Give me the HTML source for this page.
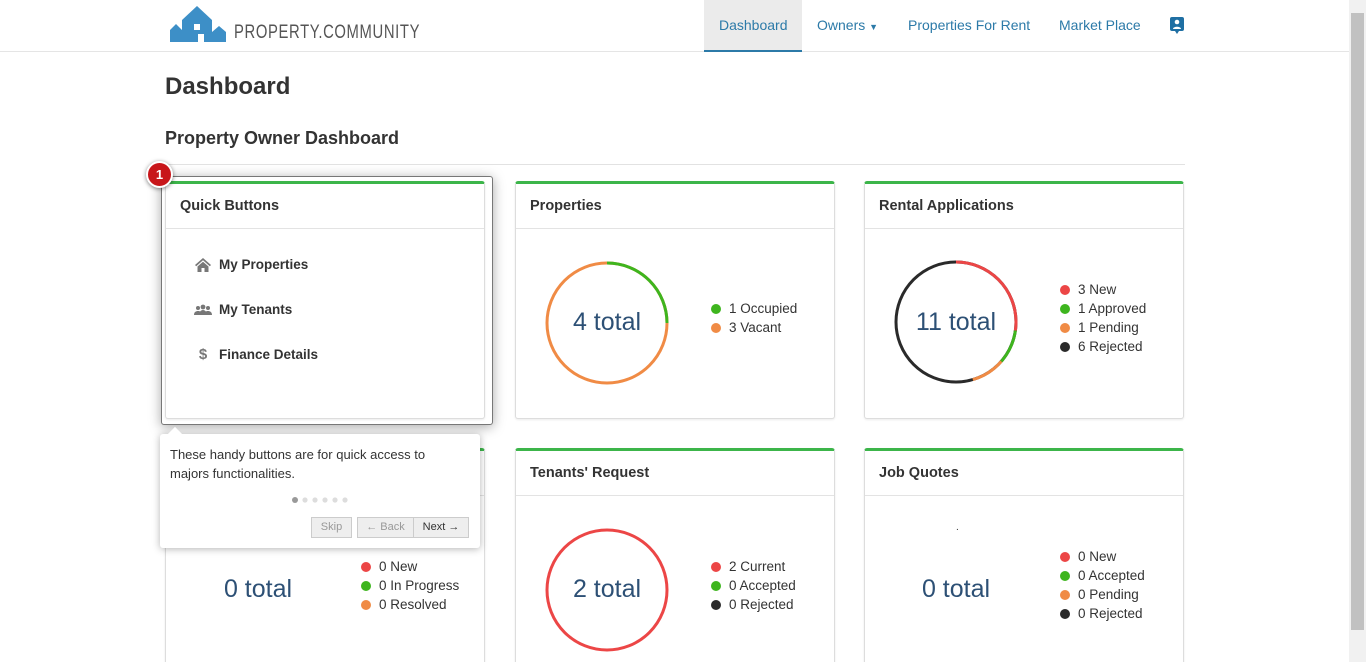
<!DOCTYPE html>
<html><head><meta charset="utf-8"><style>
*{margin:0;padding:0;box-sizing:border-box}
html,body{width:1366px;height:662px;overflow:hidden}
body{background:#fff;font-family:"Liberation Sans",Arial,sans-serif;color:#333;position:relative}
.a{position:absolute}
.nav{left:0;top:0;width:1349px;height:52px;border-bottom:1px solid #e5e5e5}
.nl{top:17px;font-size:14px;color:#2c7aa8}
.card{position:absolute;width:320px;height:238px;border:1px solid #ddd;border-top:3px solid #3cb54a;border-radius:3px;background:#fff;box-shadow:0 1px 2px rgba(0,0,0,.08)}
.card h3{font-size:14.5px;font-weight:bold;color:#333;padding:14px 14px 0;height:45px;border-bottom:1px solid #e3e3e3}
.tot{position:absolute;font-size:25px;color:#2d5075;width:120px;text-align:center}
.lg{position:absolute;font-size:13.5px;color:#333;line-height:19px}
.lg i{display:inline-block;width:10px;height:10px;border-radius:50%;margin-right:8px;vertical-align:-1px}
.r{background:#ec4646}.g{background:#3eb51e}.o{background:#f08b45}.k{background:#2a2a2a}
.qi{position:absolute;left:53px;font-size:13.5px;font-weight:bold;color:#333}
.ic{position:absolute;left:28px;width:18px;text-align:center}
.btn{position:absolute;top:517px;height:21px;border:1px solid #ccc;background:#eee;font-size:11px;color:#999;text-align:center;line-height:19px}
</style></head><body>
<div class="a nav"></div>
<svg class="a" style="left:168px;top:4px" width="60" height="40" viewBox="0 0 60 40">
<path fill="#3d8fc7" d="M2 38V26l6-6 6 6v12zM14 38V16L29 2l15 14v22H36v-8h-6v8zM44 38V28l7-6 7 6v10z"/>
<rect x="26" y="20" width="6" height="6" fill="#fff"/></svg>
<div class="a" style="left:234px;top:22px;font-size:19px;color:#555;letter-spacing:.8px;transform:scaleX(.78);transform-origin:left">PROPERTY.COMMUNITY</div>
<div class="a" style="left:704px;top:0;width:98px;height:52px;background:#ebebeb;border-bottom:2px solid #2c7aa8"></div>
<div class="a nl" style="left:719px">Dashboard</div>
<div class="a nl" style="left:817px">Owners <span style="font-size:9px">▼</span></div>
<div class="a nl" style="left:908px">Properties For Rent</div>
<div class="a nl" style="left:1059px">Market Place</div>
<svg class="a" style="left:1170px;top:17px" width="14" height="17" viewBox="0 0 14 17"><rect width="14" height="14" rx="2" fill="#1f6fa3"/><path d="M5 14h4l-2 3z" fill="#1f6fa3"/><circle cx="7" cy="5" r="2.3" fill="#fff"/><path d="M3 12c0-3 8-3 8 0z" fill="#fff"/></svg>
<div class="a" style="left:1349px;top:0;width:17px;height:662px;background:#f1f1f1"></div>
<div class="a" style="left:1351px;top:13px;width:13px;height:617px;background:#c1c1c1"></div>
<div class="a" style="left:165px;top:73px;font-size:24px;font-weight:bold;color:#333">Dashboard</div>
<div class="a" style="left:165px;top:128px;font-size:18px;font-weight:bold;color:#333">Property Owner Dashboard</div>
<div class="a" style="left:165px;top:164px;width:1020px;border-top:1px solid #e2e2e2"></div>

<div class="a" style="left:161px;top:176px;width:332px;height:249px;border:1px solid #777;border-radius:3px;box-shadow:0 2px 12px rgba(0,0,0,.35);background:#fff"></div>
<div class="card" style="left:165px;top:181px"><h3>Quick Buttons</h3>
<svg class="ic" style="top:73px" width="18" height="16" viewBox="0 0 18 16"><path fill="#777" d="M9 1L1 8l1.2 1.2L9 3.3l6.8 5.9L17 8zM3.5 9.5V15h4v-4h3v4h4V9.5L9 4.8z"/></svg>
<svg class="ic" style="top:120px" width="18" height="12" viewBox="0 0 18 12"><g fill="#777"><circle cx="4" cy="4" r="2"/><circle cx="9" cy="3" r="2.4"/><circle cx="14" cy="4" r="2"/><path d="M0 11c0-3 2-4 4-4s3 1 3 2v2zM5 11c0-3 2-5 4-5s4 2 4 5zM11 11v-2c0-1 1-2 3-2s4 1 4 4z"/></g></svg>
<div class="ic" style="top:162px;color:#777;font-size:15px;font-weight:bold">$</div>
<div class="qi" style="top:73px">My Properties</div>
<div class="qi" style="top:118px">My Tenants</div>
<div class="qi" style="top:163px">Finance Details</div></div>
<div class="a" style="left:146px;top:161px;width:27px;height:27px;border-radius:50%;background:#c8161a;border:2px solid #fff;box-shadow:0 1px 4px rgba(0,0,0,.5);color:#fff;font-size:13px;font-weight:bold;text-align:center;line-height:23px">1</div>

<div class="card" style="left:515px;top:181px"><h3>Properties</h3></div>
<svg class="a" style="left:545px;top:261px" width="124" height="124"><g transform="rotate(-90 62 62)" fill="none" stroke-width="3"><circle cx="62" cy="62" r="60" stroke="#f08b45"/><circle cx="62" cy="62" r="60" stroke="#3eb51e" stroke-dasharray="94.2 400"/></g></svg>
<div class="tot" style="left:547px;top:308px">4 total</div>
<div class="lg" style="left:711px;top:299px"><i class="g"></i>1 Occupied<br><i class="o"></i>3 Vacant</div>

<div class="card" style="left:864px;top:181px"><h3>Rental Applications</h3></div>
<svg class="a" style="left:894px;top:260px" width="124" height="124"><g transform="rotate(-90 62 62)" fill="none" stroke-width="3"><circle cx="62" cy="62" r="60" stroke="#2a2a2a"/><circle cx="62" cy="62" r="60" stroke="#ec4646" stroke-dasharray="102.8 400"/><circle cx="62" cy="62" r="60" stroke="#3eb51e" stroke-dasharray="0 102.8 34.3 400"/><circle cx="62" cy="62" r="60" stroke="#f08b45" stroke-dasharray="0 137.1 34.3 400"/></g></svg>
<div class="tot" style="left:896px;top:308px">11 total</div>
<div class="lg" style="left:1060px;top:280px"><i class="r"></i>3 New<br><i class="g"></i>1 Approved<br><i class="o"></i>1 Pending<br><i class="k"></i>6 Rejected</div>

<div class="card" style="left:165px;top:448px;height:230px"><h3></h3></div>
<div class="tot" style="left:198px;top:575px">0 total</div>
<div class="lg" style="left:361px;top:557px"><i class="r"></i>0 New<br><i class="g"></i>0 In Progress<br><i class="o"></i>0 Resolved</div>

<div class="card" style="left:515px;top:448px;height:230px"><h3>Tenants' Request</h3></div>
<svg class="a" style="left:545px;top:528px" width="124" height="124"><circle cx="62" cy="62" r="60" fill="none" stroke="#ec4646" stroke-width="3"/></svg>
<div class="tot" style="left:547px;top:575px">2 total</div>
<div class="lg" style="left:711px;top:557px"><i class="r"></i>2 Current<br><i class="g"></i>0 Accepted<br><i class="k"></i>0 Rejected</div>

<div class="card" style="left:864px;top:448px;height:230px"><h3>Job Quotes</h3></div>
<div class="a" style="left:956px;top:522px;font-size:10px">.</div>
<div class="tot" style="left:896px;top:575px">0 total</div>
<div class="lg" style="left:1060px;top:547px"><i class="r"></i>0 New<br><i class="g"></i>0 Accepted<br><i class="o"></i>0 Pending<br><i class="k"></i>0 Rejected</div>

<div class="a" style="left:160px;top:434px;width:320px;height:114px;background:#fff;border-radius:3px;box-shadow:0 1px 8px rgba(0,0,0,.3)"></div>
<div class="a" style="left:170px;top:429px;width:10px;height:10px;background:#fff;transform:rotate(45deg)"></div>
<div class="a" style="left:170px;top:445px;font-size:13px;line-height:19px;color:#333">These handy buttons are for quick access to<br>majors functionalities.</div>
<svg class="a" style="left:291px;top:496px" width="60" height="8"><g fill="#ddd"><circle cx="4" cy="4" r="3" fill="#999"/><circle cx="14" cy="4" r="2.6"/><circle cx="24" cy="4" r="2.6"/><circle cx="34" cy="4" r="2.6"/><circle cx="44" cy="4" r="2.6"/><circle cx="54" cy="4" r="2.6"/></g></svg>
<div class="btn" style="left:311px;width:41px">Skip</div>
<div class="btn" style="left:357px;width:57px">← Back</div>
<div class="btn" style="left:413px;width:56px;color:#333">Next →</div>
</body></html>
